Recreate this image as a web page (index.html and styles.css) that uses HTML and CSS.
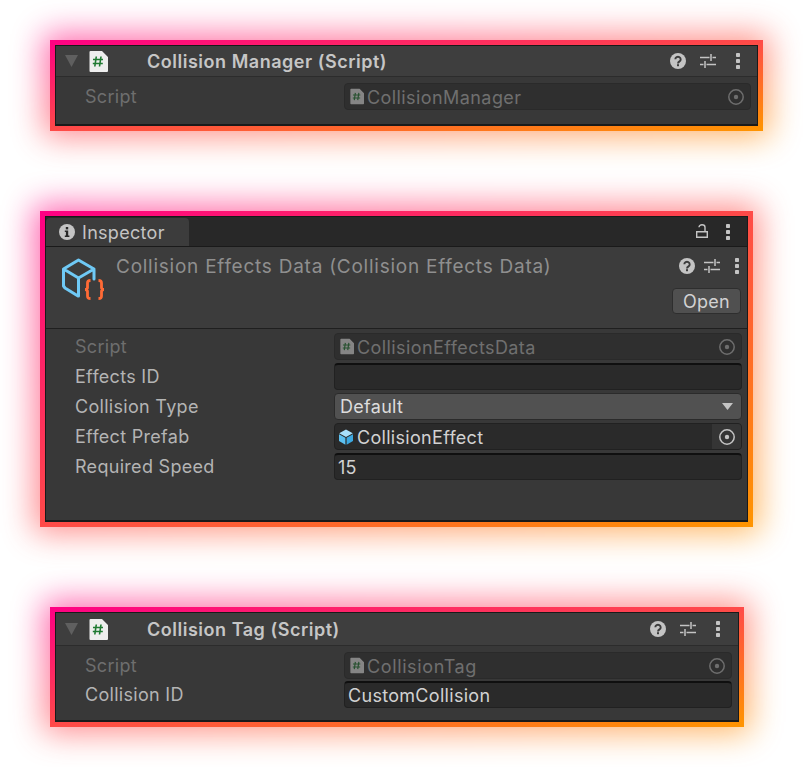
FILE: index.html
```html
<!DOCTYPE html>
<html lang="en">
<head>
<meta charset="utf-8">
<title>Collision components</title>
<link rel="stylesheet" href="styles.css">
</head>
<body>
<svg class="defs" width="0" height="0" aria-hidden="true">
  <defs>
    <symbol id="i-help" viewBox="0 0 16 16"><circle cx="8" cy="8" r="8" fill="#c4c4c4"/><path d="M5.300 6.300a2.700 2.500 0 1 1 4.200 2.100c-.9.6-1.500 1-1.500 2" fill="none" stroke="#3c3c3c" stroke-width="1.900"/><rect x="7" y="11.200" width="2" height="2" fill="#3c3c3c"/></symbol>
    <symbol id="i-sliders" viewBox="0 0 16 14"><path d="M0 3.500h9.500M12.500 3.500h3.500M11 0v7M0 10.500h3.500M6.500 10.500h9.500M5 7v7" stroke="#c4c4c4" stroke-width="1.500" fill="none"/></symbol>
    <symbol id="i-dots" viewBox="0 0 4 16"><rect x="0" y="0" width="4" height="4" rx=".8" fill="#c4c4c4"/><rect x="0" y="6" width="4" height="4" rx=".8" fill="#c4c4c4"/><rect x="0" y="12" width="4" height="4" rx=".8" fill="#c4c4c4"/></symbol>
    <symbol id="i-script" viewBox="0 0 19 21"><path d="M1.500 0H13l6 6v14a1 1 0 0 1-1 1H1.500a1 1 0 0 1-1-1V1a1 1 0 0 1 1-1z" fill="#eeeeee"/><path d="M7.300 5.500 5.800 15.500M12 5.500l-1.500 10M4 8.500h10M3.800 12.500h10" stroke="#1f7a32" stroke-width="1.600" fill="none"/></symbol>
    <symbol id="i-target" viewBox="0 0 16 16"><circle cx="8" cy="8" r="7.200" fill="none" stroke="currentColor" stroke-width="1.500"/><circle cx="8" cy="8" r="2.200" fill="currentColor"/></symbol>
  </defs>
</svg>

<main class="page">
  <section class="card card-manager">
    <div class="inner">
      <header class="comp-head">
        <span class="fold"></span>
        <svg class="script-icon"><use href="#i-script"/></svg>
        <h2 class="comp-title">Collision Manager (Script)</h2>
        <div class="tools">
          <svg class="tool-help"><use href="#i-help"/></svg>
          <svg class="tool-sliders"><use href="#i-sliders"/></svg>
          <svg class="tool-dots"><use href="#i-dots"/></svg>
        </div>
      </header>
      <div class="rows">
        <div class="row">
          <span class="label dim">Script</span>
          <div class="field disabled">
            <svg class="mini-script"><use href="#i-script"/></svg>
            <span>CollisionManager</span>
            <span class="pick"><svg class="target"><use href="#i-target"/></svg></span>
          </div>
        </div>
      </div>
    </div>
  </section>

  <section class="card card-inspector">
    <div class="inner">
      <div class="tabbar">
        <div class="tab">
          <svg class="info" viewBox="0 0 16 16"><circle cx="8" cy="8" r="8" fill="#c4c4c4"/><rect x="6.800" y="3" width="2.400" height="2.400" fill="#282828"/><path d="M5.800 6.500h3.400v5h1.200v1.500H5.800v-1.500h1.100V8H5.800z" fill="#282828"/></svg>
          <span>Inspector</span>
        </div>
        <div class="tab-tools">
          <svg class="lock" viewBox="0 0 12 14"><path d="M.7 7.700h10.600v5.600H.7zM3 3.300a3 2.600 0 0 1 6 0v4.400" fill="none" stroke="#c4c4c4" stroke-width="1.400"/></svg>
          <svg class="tool-dots"><use href="#i-dots"/></svg>
        </div>
      </div>
      <header class="asset-head">
        <svg class="asset-icon" viewBox="0 0 46 44">
          <path d="M15 3.500 17.500 2 20 3.500 33 11v10M15 3.500 2.500 11v17L4 30l13 8M2.500 11 17.500 20 33 11M17.500 20v18" fill="none" stroke="#6fc9f5" stroke-width="3" stroke-linejoin="round" stroke-linecap="round"/>
          <path d="M29.500 22.500c-2.500 0-3 .8-3 2.500v4.500c0 1.500-.8 2-2.500 2 1.700 0 2.500.5 2.500 2V38c0 1.700.5 2.500 3 2.500M37.500 22.500c2.500 0 3 .8 3 2.500v4.500c0 1.500.8 2 2.500 2-1.700 0-2.500.5-2.500 2V38c0 1.700-.5 2.500-3 2.500" fill="none" stroke="#ff6a35" stroke-width="2.800"/>
        </svg>
        <h2 class="asset-title">Collision Effects Data (Collision Effects Data)</h2>
        <div class="asset-side">
          <div class="tools">
            <svg class="tool-help"><use href="#i-help"/></svg>
            <svg class="tool-sliders"><use href="#i-sliders"/></svg>
            <svg class="tool-dots"><use href="#i-dots"/></svg>
          </div>
          <button class="open" type="button">Open</button>
        </div>
      </header>
      <div class="rows">
        <div class="row">
          <span class="label dim">Script</span>
          <div class="field disabled">
            <svg class="mini-script"><use href="#i-script"/></svg>
            <span>CollisionEffectsData</span>
            <span class="pick"><svg class="target"><use href="#i-target"/></svg></span>
          </div>
        </div>
        <div class="row">
          <span class="label">Effects ID</span>
          <div class="field input"></div>
        </div>
        <div class="row">
          <span class="label">Collision Type</span>
          <div class="field select">
            <span>Default</span>
            <span class="caret"></span>
          </div>
        </div>
        <div class="row">
          <span class="label">Effect Prefab</span>
          <div class="field object">
            <svg class="cube" viewBox="0 0 16 16"><path d="M8 .5 14.800 4.300 8 8 1.200 4.300z" fill="#a8e0fb"/><path d="M1 5.200 7.400 8.800V15.700L1 12z" fill="#5cc0f0"/><path d="M15 5.200 8.600 8.800V15.700L15 12z" fill="#3ca8e0"/></svg>
            <span>CollisionEffect</span>
            <span class="pick lit"><svg class="target"><use href="#i-target"/></svg></span>
          </div>
        </div>
        <div class="row">
          <span class="label">Required Speed</span>
          <div class="field input">15</div>
        </div>
      </div>
    </div>
  </section>

  <section class="card card-tag">
    <div class="inner">
      <header class="comp-head">
        <span class="fold"></span>
        <svg class="script-icon"><use href="#i-script"/></svg>
        <h2 class="comp-title">Collision Tag (Script)</h2>
        <div class="tools">
          <svg class="tool-help"><use href="#i-help"/></svg>
          <svg class="tool-sliders"><use href="#i-sliders"/></svg>
          <svg class="tool-dots"><use href="#i-dots"/></svg>
        </div>
      </header>
      <div class="rows">
        <div class="row">
          <span class="label dim">Script</span>
          <div class="field disabled">
            <svg class="mini-script"><use href="#i-script"/></svg>
            <span>CollisionTag</span>
            <span class="pick"><svg class="target"><use href="#i-target"/></svg></span>
          </div>
        </div>
        <div class="row">
          <span class="label">Collision ID</span>
          <div class="field input">CustomCollision</div>
        </div>
      </div>
    </div>
  </section>
</main>
</body>
</html>
```
FILE: styles.css
```css
* { box-sizing: border-box; }

html {
  background: #fff;
}

html, body {
  margin: 0;
  height: 767px;
  overflow: hidden;
}

body {
  font-family: Inter, "Liberation Sans", sans-serif;
  font-size: 18px;
  letter-spacing: .3px;
  color: #c4c4c4;
}

.defs { position: absolute; }

.page {
  display: flex;
  flex-direction: column;
  padding-top: 40px;
}

.card {
  position: relative;
  padding: 5px;
  background: linear-gradient(to bottom right, #ff0084 0%, #ff4a48 50%, #ff9500 100%);
}

.card::before {
  content: "";
  position: absolute;
  inset: -6px;
  z-index: -1;
  background: linear-gradient(to bottom right, #ff0084 0%, #ff4a48 50%, #ff9500 100%);
  filter: blur(16px);
  opacity: .62;
}

.card-manager { margin-left: 50px; width: 713px; height: 91px; }
.card-inspector { margin: 80px 0 0 40px; width: 713px; height: 316px; }
.card-tag { margin: 80px 0 0 50px; width: 694px; height: 120px; }

.inner {
  height: 100%;
  display: flex;
  flex-direction: column;
  background: #383838;
  border-top: 1px solid #1a1a1a;
  border-left: 1px solid #1a1a1a;
  border-right: 1px solid #1a1a1a;
  border-bottom: 2px solid #1a1a1a;
}

.comp-head {
  display: flex;
  align-items: center;
  height: 31px;
  flex: none;
  padding-left: 9px;
  background: #3e3e3e;
  border-bottom: 1px solid #2c2c2c;
}

.card-tag .comp-head { height: 33px; }
.card-tag .tools { padding-right: 18px; }

.fold {
  width: 13px;
  height: 12px;
  margin-right: 11px;
  background: #5f5f5f;
  clip-path: polygon(0 0, 100% 0, 50% 100%);
}

.script-icon {
  width: 19px;
  height: 21px;
  flex: none;
}

.comp-title {
  margin: 0 0 0 39px;
  flex: 1;
  font-size: 18px;
  font-weight: 600;
  letter-spacing: .52px;
  color: #c6c6c6;
}

.tools {
  display: flex;
  align-items: center;
  padding-right: 17px;
}

.tool-help { width: 16px; height: 16px; }
.tool-sliders { width: 16px; height: 14px; margin-left: 14px; }
.tool-dots { width: 4px; height: 16px; margin-left: 20px; flex: none; }

.rows {
  display: flex;
  flex-direction: column;
  gap: 3px;
  padding: 6px 6px 0 29px;
}

.card-inspector .rows { padding: 4px 5px 0 29px; }
.card-tag .rows { gap: 2px; }

.row {
  display: flex;
  align-items: center;
  height: 27px;
}

.label {
  width: 259px;
  flex: none;
  color: #b4b4b4;
  white-space: nowrap;
}

.dim { color: #6e6e6e; }

.field {
  flex: 1;
  min-width: 0;
  height: 27px;
  display: flex;
  align-items: center;
  border-radius: 4px;
  background: #2a2a2a;
  border: 1px solid #212121;
  color: #d2d2d2;
  white-space: nowrap;
}

.field.input {
  padding-left: 3px;
  border-top: 2px solid #0f0f0f;
}

.field.object {
  padding: 2px 0 0 3px;
}

.field.disabled {
  padding: 2px 0 0 5px;
  background: #2f2f2f;
  border-color: #2a2a2a;
  color: #6f6f6f;
  letter-spacing: .42px;
}

.card-tag .field.disabled { letter-spacing: .62px; }

.field.select {
  justify-content: space-between;
  padding: 0 8px 0 5px;
  background: #515151;
  border-color: #2b2b2b;
  color: #dcdcdc;
}

.caret {
  width: 11px;
  height: 7px;
  background: #c4c4c4;
  clip-path: polygon(0 0, 100% 0, 50% 100%);
}

.mini-script {
  width: 14px;
  height: 17px;
  margin: -2px 3px 0 0;
  flex: none;
  opacity: .45;
}

.cube {
  width: 16px;
  height: 16px;
  margin: -2px 3px 0 0;
  flex: none;
}

.pick {
  margin: -2px 0 0 auto;
  align-self: stretch;
  width: 29px;
  display: flex;
  align-items: center;
  justify-content: center;
  color: #6e6e6e;
}

.pick.lit {
  background: #353535;
  color: #c4c4c4;
  border-radius: 0 3px 3px 0;
}

.target { width: 16px; height: 16px; }

.tabbar {
  display: flex;
  justify-content: space-between;
  height: 30px;
  flex: none;
  background: #282828;
  border-bottom: 1px solid #1a1a1a;
}

.tab {
  display: flex;
  align-items: center;
  gap: 7px;
  width: 143px;
  padding-left: 13px;
  background: #3c3c3c;
  border-radius: 4px 4px 0 0;
  margin-top: 1px;
  color: #c4c4c4;
}

.info { width: 16px; height: 16px; }

.tab-tools {
  display: flex;
  align-items: center;
  padding-right: 17px;
}

.tab-tools .tool-dots { margin-left: 18px; }

.lock { width: 12px; height: 14px; margin-bottom: 2px; }

.asset-head {
  display: flex;
  height: 82px;
  flex: none;
  background: #3c3c3c;
  border-bottom: 1px solid #1f1f1f;
  padding: 9px 6px 0 15px;
}

.asset-icon {
  width: 46px;
  height: 44px;
  margin-top: 2px;
  flex: none;
}

.asset-title {
  flex: 1;
  margin: 0 0 0 9px;
  font-size: 19px;
  font-weight: 400;
  line-height: 22px;
  letter-spacing: .75px;
  color: #8f8f8f;
  white-space: nowrap;
}

.asset-side {
  display: flex;
  flex-direction: column;
  align-items: flex-end;
  gap: 14px;
}

.asset-side .tools {
  padding: 2px 2px 0 0;
}

.asset-side .tool-sliders { margin-left: 9px; }
.asset-side .tool-dots { margin-left: 15px; }

.open {
  width: 69px;
  height: 26px;
  padding: 0;
  font: inherit;
  letter-spacing: .3px;
  color: #d2d2d2;
  background: #505050;
  border: 1px solid #2e2e2e;
  border-radius: 4px;
}
```
